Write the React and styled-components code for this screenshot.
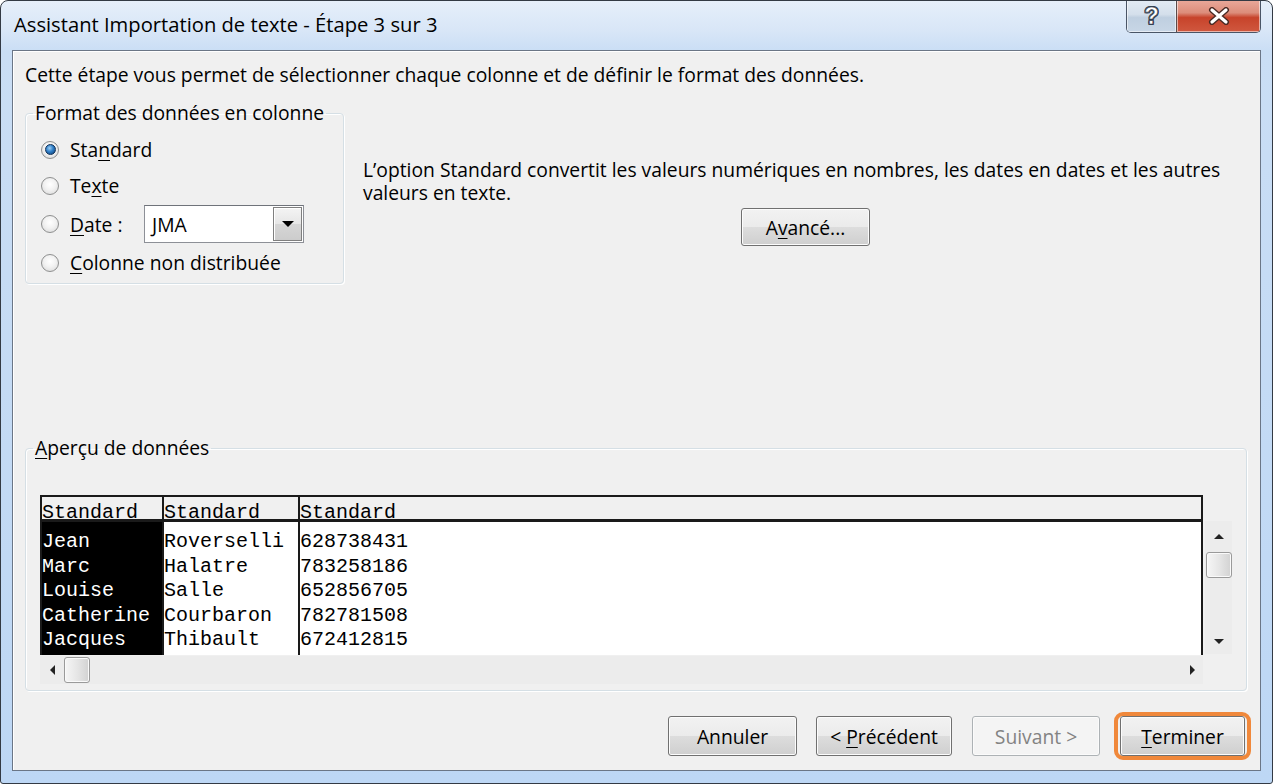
import React from 'react';
import styled, { createGlobalStyle } from 'styled-components';

const Global = createGlobalStyle`
  html, body { margin: 0; padding: 0; background: #ffffff; }
  body { font-family: "Open Sans", "Noto Sans", sans-serif; color: #000; }
  * { box-sizing: border-box; }
`;

const Window = styled.div`
  width: 1273px;
  height: 784px;
  border: 1px solid #333a44;
  border-radius: 8px 8px 3px 3px;
  background: linear-gradient(180deg, #e6effa 0px, #d8e6f7 30px, #cadef5 50px, #bdd7f5 100%);
  display: flex;
  flex-direction: column;
  padding: 0 11px 12px 11px;
  overflow: hidden;
`;

const TitleBar = styled.div`
  height: 49px;
  display: flex;
  align-items: flex-start;
  justify-content: space-between;
`;

const Title = styled.div`
  padding: 9px 0 0 2px;
  font-size: 20.2px;
  line-height: 28px;
  color: #000;
`;

const Caption = styled.div`
  display: flex;
  margin-top: -1px;
  border: 1px solid #4a5566;
  border-top: none;
  border-radius: 0 0 5px 5px;
  overflow: hidden;
  height: 33px;
`;

const CapButton = styled.div`
  width: ${p => p.$w}px;
  height: 100%;
  display: flex;
  align-items: center;
  justify-content: center;
  background: ${p => p.$close
    ? 'linear-gradient(180deg, #e9a99b 0%, #dc8d7b 40%, #c7432b 55%, #d0583f 100%)'
    : 'linear-gradient(180deg, #e3ebf4 0%, #d4dfeb 45%, #bfcfe0 55%, #c8d6e6 100%)'};
  border-left: ${p => p.$close ? '1px solid #5a4a4a' : 'none'};
  box-shadow: inset 0 0 0 1px rgba(255,255,255,0.55);
`;

const HelpGlyph = styled.span`
  font-family: "Liberation Sans", "DejaVu Sans", sans-serif;
  font-weight: 700;
  font-size: 24px;
  line-height: 24px;
  color: #ffffff;
  -webkit-text-stroke: 0.6px #33404f;
  text-shadow: -1px 0 #33404f, 1px 0 #33404f, 0 -1px #33404f, 0 1px #33404f,
    1px 1px #33404f, -1px -1px #33404f, 1px -1px #33404f, -1px 1px #33404f;
`;

const Client = styled.div`
  flex: 1;
  border: 1px solid #6b7686;
  background: #f0f0f0;
  box-shadow: inset 1px 1px 0 #ffffff;
  display: flex;
  flex-direction: column;
  padding: 12px 13px 0 12px;
  font-size: 19.3px;
`;

const Intro = styled.div`
  line-height: 24px;
  white-space: nowrap;
`;

const TopRow = styled.div`
  display: flex;
  align-items: flex-start;
  margin-top: 14px;
`;

const Group = styled.fieldset`
  margin: 0;
  padding: 0;
  min-width: 0;
  border: 1px solid #d5dfe5;
  border-radius: 4px;
  box-shadow: inset 1px 1px 0 #ffffff, 1px 1px 0 #ffffff;
`;

const FormatGroup = styled(Group)`
  width: 319px;
  height: 183px;
`;

const PreviewGroup = styled(Group)`
  margin-top: 152px;
  height: 255px;
`;

const Legend = styled.legend`
  margin-left: 7px;
  padding: 0 2px;
  font-size: 19.3px;
  line-height: 24px;
`;

const RadioList = styled.div`
  padding: 8px 0 0 15px;
  display: flex;
  flex-direction: column;
  gap: 3px;
`;

const PreviewInner = styled.div`
  padding: 35px 13px 6px 14px;
`;

const Key = styled.span`
  text-decoration: underline;
  text-underline-offset: 3px;
`;

const Label = styled.span`
  white-space: pre;
`;

const RadioRow = styled.div`
  display: flex;
  align-items: center;
  height: ${p => p.$h || 33}px;
`;

const RadioCircle = styled.span`
  width: 18px;
  height: 18px;
  border-radius: 50%;
  border: 1px solid #8e8f8f;
  background: radial-gradient(circle at 50% 40%, #ffffff 0%, #f2f2f2 45%, #d6d6d6 100%);
  display: flex;
  align-items: center;
  justify-content: center;
  flex-shrink: 0;
  margin-right: 11px;
  &::after {
    content: '';
    display: ${p => p.$checked ? 'block' : 'none'};
    width: 9px;
    height: 9px;
    border-radius: 50%;
    background: radial-gradient(circle at 40% 35%, #9fd0f5 0%, #2f7fc8 45%, #0e3a6d 100%);
    border: 1px solid #0f2f56;
  }
`;

const DateLabel = styled.span`
  width: 74px;
`;

const Combo = styled.div`
  width: 160px;
  height: 38px;
  border: 1px solid #8d9097;
  border-top-color: #6f737a;
  background: #ffffff;
  display: flex;
  align-items: center;
  justify-content: space-between;
  padding: 1px 1px 1px 7px;
`;

const ComboDrop = styled.div`
  width: 29px;
  height: 100%;
  border: 1px solid #7f7f7f;
  background: linear-gradient(180deg, #f4f4f4 0%, #e6e6e6 50%, #d6d6d6 51%, #cccccc 100%);
  box-shadow: inset 1px 1px 0 #ffffff;
  display: flex;
  align-items: center;
  justify-content: center;
`;

const RightCol = styled.div`
  margin-left: 19px;
  margin-top: 57px;
  flex: 1;
  display: flex;
  flex-direction: column;
  align-items: center;
`;

const Explain = styled.div`
  align-self: stretch;
  line-height: 23px;
  white-space: nowrap;
`;

const Button = styled.div`
  width: ${p => p.$w}px;
  height: ${p => p.$h || 40}px;
  border: 1px solid ${p => p.$disabled ? '#adb2b5' : '#707070'};
  border-radius: 3px;
  background: ${p => p.$disabled
    ? '#f4f4f4'
    : 'linear-gradient(180deg, #f2f2f2 0%, #ebebeb 49%, #dddddd 50%, #cfcfcf 100%)'};
  box-shadow: inset 0 0 0 1px ${p => p.$disabled ? '#fbfbfb' : '#fcfcfc'};
  color: ${p => p.$disabled ? '#838383' : '#000'};
  display: flex;
  align-items: center;
  justify-content: center;
  font-size: 19.3px;
  flex-shrink: 0;
`;

const AdvButton = styled(Button)`
  margin-top: 4px;
  margin-left: 1px;
`;

const PreviewArea = styled.div`
  display: flex;
  gap: 2px;
`;

const LeftPane = styled.div`
  width: 1163px;
  display: flex;
  flex-direction: column;
  gap: 1px;
`;

const Table = styled.div`
  height: 160px;
  display: flex;
  border-top: 2px solid #1a1a1a;
  border-right: 2px solid #1a1a1a;
  background: #ffffff;
  font-family: "Liberation Mono", "Courier New", monospace;
  font-size: 20px;
`;

const Column = styled.div`
  width: ${p => p.$w ? p.$w + 'px' : 'auto'};
  flex: ${p => p.$w ? '0 0 auto' : '1'};
  border-left: 2px solid #1a1a1a;
  display: flex;
  flex-direction: column;
`;

const HeadCell = styled.div`
  height: 25px;
  flex-shrink: 0;
  background: #f0f0f0;
  border-bottom: 3px solid #1a1a1a;
  padding-top: 6px;
  line-height: 20px;
  white-space: nowrap;
`;

const Body = styled.div`
  flex: 1;
  background: ${p => p.$selected ? '#000' : '#fff'};
  color: ${p => p.$selected ? '#fff' : '#000'};
  padding-top: 8px;
`;

const Cell = styled.div`
  line-height: 24.5px;
  white-space: nowrap;
`;

const HScroll = styled.div`
  height: 28px;
  background: #ececec;
  display: flex;
  align-items: center;
  padding: 0 8px 0 10px;
`;

const VScroll = styled.div`
  width: 27px;
  height: 133px;
  margin-top: 26px;
  background: #ececec;
  display: flex;
  flex-direction: column;
  align-items: center;
  padding: 13px 0 10px;
`;

const Thumb = styled.div`
  width: 26px;
  height: 26px;
  border: 1px solid #9a9a9a;
  border-radius: 3px;
  background: linear-gradient(90deg, #f6f6f6 0%, #e6e6e6 50%, #d2d2d2 100%);
  box-shadow: inset 0 0 0 1px #fafafa;
`;

const HThumb = styled(Thumb)`
  margin-left: 9px;
`;

const VThumb = styled(Thumb)`
  margin-top: 13px;
`;

const Spacer = styled.div`
  flex: 1;
`;

const ButtonRow = styled.div`
  display: flex;
  justify-content: flex-end;
  align-items: center;
  margin-top: 21px;
  margin-right: -4px;
`;

const Gap = styled.div`
  width: ${p => p.$w}px;
`;

const Highlight = styled.div`
  border: 4px solid #f0883b;
  border-radius: 9px;
  padding: 0 2px;
  display: flex;
`;

const Tri = ({ dir, size = 7, color = '#222' }) => {
  const s = size;
  const pts = {
    up: `0,${s} ${s},0 ${2 * s},${s}`,
    down: `0,0 ${2 * s},0 ${s},${s}`,
    left: `${s},0 ${s},${2 * s} 0,${s}`,
    right: `0,0 0,${2 * s} ${s},${s}`,
  }[dir];
  const w = dir === 'up' || dir === 'down' ? 2 * s : s;
  const h = dir === 'up' || dir === 'down' ? s : 2 * s;
  return (
    <svg width={w} height={h} viewBox={`0 0 ${w} ${h}`}>
      <polygon points={pts} fill={color} />
    </svg>
  );
};

const rows = [
  ['Jean', 'Roverselli', '628738431'],
  ['Marc', 'Halatre', '783258186'],
  ['Louise', 'Salle', '652856705'],
  ['Catherine', 'Courbaron', '782781508'],
  ['Jacques', 'Thibault', '672412815'],
];

export default function App() {
  return (
    <>
      <Global />
      <Window>
        <TitleBar>
          <Title>Assistant Importation de texte - Étape 3 sur 3</Title>
          <Caption>
            <CapButton $w={49}><HelpGlyph>?</HelpGlyph></CapButton>
            <CapButton $w={84} $close>
              <svg width="22" height="18" viewBox="0 0 22 18">
                <path d="M4 3 L18 15 M18 3 L4 15" stroke="#4a2a24" strokeWidth="6" strokeLinecap="round" />
                <path d="M4 3 L18 15 M18 3 L4 15" stroke="#ffffff" strokeWidth="3.2" strokeLinecap="round" />
              </svg>
            </CapButton>
          </Caption>
        </TitleBar>
        <Client>
          <Intro>Cette étape vous permet de sélectionner chaque colonne et de définir le format des données.</Intro>
          <TopRow>
            <FormatGroup>
              <Legend>Format des données en colonne</Legend>
              <RadioList>
                <RadioRow>
                  <RadioCircle $checked />
                  <Label>Sta<Key>n</Key>dard</Label>
                </RadioRow>
                <RadioRow>
                  <RadioCircle />
                  <Label>Te<Key>x</Key>te</Label>
                </RadioRow>
                <RadioRow $h={38}>
                  <RadioCircle />
                  <DateLabel><Key>D</Key>ate :</DateLabel>
                  <Combo>
                    <span>JMA</span>
                    <ComboDrop><Tri dir="down" size={6} color="#000" /></ComboDrop>
                  </Combo>
                </RadioRow>
                <RadioRow>
                  <RadioCircle />
                  <Label><Key>C</Key>olonne non distribuée</Label>
                </RadioRow>
              </RadioList>
            </FormatGroup>
            <RightCol>
              <Explain>
                L’option Standard convertit les valeurs numériques en nombres, les dates en dates et les autres<br />
                valeurs en texte.
              </Explain>
              <AdvButton $w={129} $h={38}><Label>A<Key>v</Key>ancé...</Label></AdvButton>
            </RightCol>
          </TopRow>
          <PreviewGroup>
            <Legend><Key>A</Key>perçu de données</Legend>
            <PreviewInner>
              <PreviewArea>
                <LeftPane>
                  <Table>
                    <Column $w={122}>
                      <HeadCell>Standard</HeadCell>
                      <Body $selected>{rows.map(r => <Cell key={r[0]}>{r[0]}</Cell>)}</Body>
                    </Column>
                    <Column $w={136}>
                      <HeadCell>Standard</HeadCell>
                      <Body>{rows.map(r => <Cell key={r[1]}>{r[1]}</Cell>)}</Body>
                    </Column>
                    <Column>
                      <HeadCell>Standard</HeadCell>
                      <Body>{rows.map(r => <Cell key={r[2]}>{r[2]}</Cell>)}</Body>
                    </Column>
                  </Table>
                  <HScroll>
                    <Tri dir="left" size={5} />
                    <HThumb />
                    <Spacer />
                    <Tri dir="right" size={5} />
                  </HScroll>
                </LeftPane>
                <VScroll>
                  <Tri dir="up" size={5} />
                  <VThumb />
                  <Spacer />
                  <Tri dir="down" size={5} />
                </VScroll>
              </PreviewArea>
            </PreviewInner>
          </PreviewGroup>
          <ButtonRow>
            <Button $w={129}><Label>Annuler</Label></Button>
            <Gap $w={19} />
            <Button $w={136}><Label>&lt; <Key>P</Key>récédent</Label></Button>
            <Gap $w={20} />
            <Button $w={128} $disabled><Label>Suivant &gt;</Label></Button>
            <Gap $w={14} />
            <Highlight>
              <Button $w={125}><Label><Key>T</Key>erminer</Label></Button>
            </Highlight>
          </ButtonRow>
        </Client>
      </Window>
    </>
  );
}
